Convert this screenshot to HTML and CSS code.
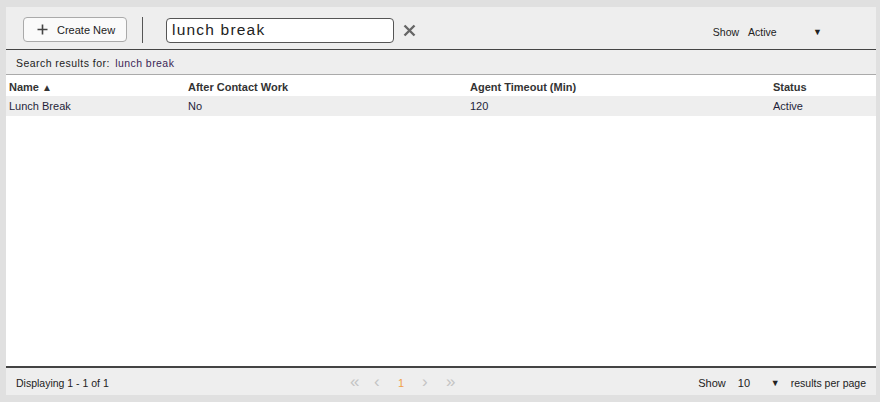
FILE: index.html
```
<!DOCTYPE html>
<html>
<head>
<meta charset="utf-8">
<link rel="stylesheet" href="styles.css">
</head>
<body>
<div class="panel">
  <div class="toolbar">
    <button class="btn-create">
      <svg class="plus" width="11" height="11" viewBox="0 0 11 11"><path d="M5.5 0.5v10M0.5 5.5h10" stroke="#444" stroke-width="1.6" fill="none"/></svg>
      <span>Create New</span>
    </button>
    <div class="sep"></div>
    <div class="search">lunch break</div>
    <svg class="clear" width="13" height="13" viewBox="0 0 13 13"><path d="M1.5 1.5l10 10M11.5 1.5l-10 10" stroke="#666" stroke-width="2.4" fill="none"/></svg>
    <div class="spacer"></div>
    <div class="show-filter">
      <span class="lbl">Show</span>
      <span class="val">Active</span>
      <span class="arrow">&#9660;</span>
    </div>
  </div>
  <div class="results-bar">Search results for: <span class="term">lunch break</span></div>
  <div class="table-area">
    <div class="row head">
      <div class="c1">Name <span class="sort">&#9650;</span></div>
      <div class="c2">After Contact Work</div>
      <div class="c3">Agent Timeout (Min)</div>
      <div class="c4">Status</div>
    </div>
    <div class="row data">
      <div class="c1">Lunch Break</div>
      <div class="c2">No</div>
      <div class="c3">120</div>
      <div class="c4">Active</div>
    </div>
  </div>
  <div class="footer">
    <div class="disp">Displaying 1 - 1 of 1</div>
    <div class="pager">
      <span class="pg">&#171;</span>
      <span class="pg">&#8249;</span>
      <span class="pg cur">1</span>
      <span class="pg">&#8250;</span>
      <span class="pg">&#187;</span>
    </div>
    <div class="per">
      <span class="lbl">Show</span>
      <span class="num">10</span>
      <span class="arrow">&#9660;</span>
      <span class="rpp">results per page</span>
    </div>
  </div>
</div>
</body>
</html>
```
FILE: styles.css
```
html, body { margin: 0; padding: 0; }
body {
  background: #e0e0e0;
  width: 880px;
  height: 402px;
  font-family: "Liberation Sans", Arial, sans-serif;
  font-size: 11px;
  color: #222;
  padding: 7px 4px 7px 6px;
  box-sizing: border-box;
}
.panel {
  background: #eeeeee;
  height: 388px;
  display: flex;
  flex-direction: column;
}
.toolbar {
  height: 43px;
  flex: none;
  border-bottom: 1px solid #444;
  display: flex;
  align-items: center;
  padding-left: 17px;
  box-sizing: border-box;
}
.btn-create {
  width: 104px;
  height: 25px;
  margin-top: 3px;
  background: #fafafa;
  border: 1px solid #aaa;
  border-radius: 4px;
  display: flex;
  align-items: center;
  padding: 0 0 0 13px;
  font-family: inherit;
  font-size: 11px;
  color: #222;
  box-sizing: border-box;
}
.btn-create .plus { margin-right: 9px; }
.sep {
  width: 1px;
  height: 26px;
  background: #555;
  margin: 3px 0 0 15px;
}
.search {
  margin: 4px 0 0 23px;
  width: 228px;
  height: 25px;
  box-sizing: border-box;
  border: 1px solid #555;
  border-radius: 4px;
  background: #fff;
  font-size: 15.5px;
  line-height: 18px;
  color: #222;
  padding: 2px 0 0 5px;
  letter-spacing: 1.2px;
}
.clear { margin: 4px 0 0 9px; }
.spacer { flex: 1; }
.show-filter {
  display: flex;
  align-items: center;
  margin: 8px 54px 0 0;
  font-size: 10.5px;
}
.show-filter .val { margin-left: 9px; width: 65px; }
.show-filter .arrow { font-size: 9px; }
.results-bar {
  height: 25px;
  flex: none;
  border-bottom: 1px solid #aaa;
  padding: 7px 0 0 10px;
  box-sizing: border-box;
  font-size: 10.5px;
  letter-spacing: 0.45px;
}
.results-bar .term { color: #3a1f55; margin-left: 2px; }
.table-area {
  flex: 1;
  background: #fff;
  border-bottom: 2px solid #444;
}
.row {
  display: flex;
  align-items: center;
  padding-left: 3px;
}
.row.head { height: 21px; font-weight: bold; color: #333; padding-top: 3px; box-sizing: border-box; }
.row.data { height: 20px; background: #eeeeee; color: #1f1f3a; }
.c1 { width: 179px; }
.c2 { width: 282px; }
.c3 { width: 303px; }
.c4 { flex: 1; }
.sort { font-size: 10px; }
.footer {
  height: 27px;
  flex: none;
  display: flex;
  align-items: center;
  padding: 2px 10px 0 10px;
  box-sizing: border-box;
}
.disp { width: 334px; font-size: 10.5px; }
.pager { display: flex; color: #c4c4c4; font-size: 17px; line-height: 14px; }
.pg { width: 24px; }
.pg.cur { color: #f0a048; font-size: 11px; padding-top: 1px; }
.per { margin-left: auto; display: flex; align-items: center; }
.per .num { margin-left: 12px; width: 33px; }
.per .arrow { font-size: 9px; margin-right: 11px; }
.per .rpp { font-size: 10.5px; }
```
